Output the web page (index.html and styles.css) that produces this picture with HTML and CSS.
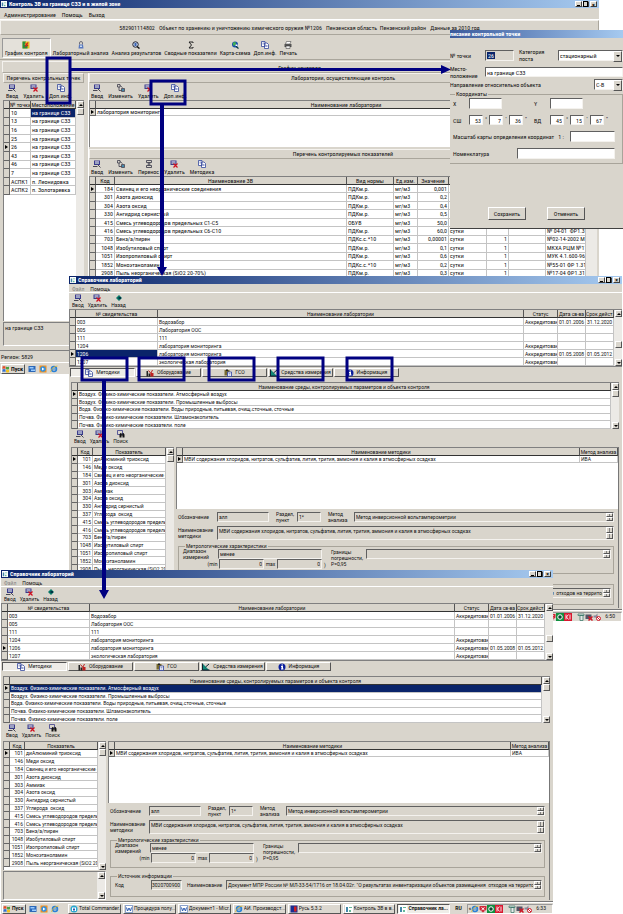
FILE: index.html
```html
<!DOCTYPE html>
<html lang="ru">
<head>
<meta charset="utf-8">
<title>Контроль ЗВ на границе СЗЗ и в жилой зоне</title>
<link rel="stylesheet" href="styles.css">
</head>
<body>
<svg class="defs" aria-hidden="true">
  <symbol id="i-app" viewBox="0 0 8 8"><path fill="#fff" d="M0 0h8v8H0z"/><path fill="#48a" d="M1 2h2v5H1z"/><path fill="#6b9" d="M4 2h3v1H4zM4 5h2v2H4z"/></symbol>
  <symbol id="i-add" viewBox="0 0 16 16"><path fill="#3a3a8c" d="M2 1h12v9H2z"/><path fill="#fff" d="M4 3h8v2H4z"/><path fill="#9ab" d="M4 6h8v2H4z"/><path stroke="#223" stroke-width="1.6" d="M0 13h9M10 10l5 5"/></symbol>
  <symbol id="i-del" viewBox="0 0 16 16"><path fill="#3a3a8c" d="M1 1h12v9H1z"/><path fill="#fff" d="M3 3h8v2H3z"/><path fill="#9ab" d="M3 6h8v2H3z"/><path stroke="#d01020" stroke-width="2.4" d="M7 7l8 8M15 7l-8 8"/></symbol>
  <symbol id="i-edit" viewBox="0 0 16 16"><path fill="none" stroke="#334" stroke-width="1.5" d="M1 1h5v5H1zM9 9h6v6H9zM4 6v7h5M6 3l5 4"/><path fill="#48a" d="M10 10h4v4h-4z"/></symbol>
  <symbol id="i-move" viewBox="0 0 16 16"><path fill="none" stroke="#334" stroke-width="1.6" d="M3 1h10v4H3zM3 11h10v4H3zM8 5v6M5 8h6"/></symbol>
  <symbol id="i-docs" viewBox="0 0 16 16"><path fill="#fff" stroke="#34489c" stroke-width="1.6" d="M1 1h7v10H1zM7 4h5l3 3v8H7z"/><path stroke="#34489c" d="M3 4h3M3 6h3M9 9h4M9 11h4"/></symbol>
  <symbol id="i-back" viewBox="0 0 16 16"><path fill="#087868" d="M8 2l6 6-6 6-6-6z"/><path fill="#034" d="M7 6h5v4H7z"/></symbol>
  <symbol id="i-find" viewBox="0 0 16 16"><path fill="none" stroke="#3a3a8c" stroke-width="1.6" d="M1 1h10v8H1z"/><path fill="#111" d="M5 15V9l2-3h2v3h2V6h2l2 3v6h-4v-4H9v4z"/></symbol>
  <symbol id="i-chart" viewBox="0 0 16 16"><path fill="#e8c020" d="M1 1h14v14H1z"/><path fill="#289040" d="M1 1h7l-3 6 6 3v5H1z"/><path stroke="#d02020" stroke-width="2.4" d="M7 5l5 5M12 3L6 12"/></symbol>
  <symbol id="i-lab" viewBox="0 0 16 16"><path fill="none" stroke="#556" stroke-width="1.6" d="M5 7V4q0-3 3-3t3 3v3"/><path fill="#5878c0" d="M4 7h8l1 8H3z"/><path fill="#cde" d="M6 9h4v3H6z"/></symbol>
  <symbol id="i-lens" viewBox="0 0 16 16"><circle cx="7" cy="7" r="5.5" fill="#cde" stroke="#223" stroke-width="2"/><path stroke="#111" stroke-width="3" d="M10 11l5 4"/><path fill="#3a60b0" d="M5 4h4v6H5z"/></symbol>
  <symbol id="i-sum" viewBox="0 0 16 16"><path fill="none" stroke="#222" stroke-width="2" d="M12 4V2H4l5 6-5 6h8v-2"/></symbol>
  <symbol id="i-map" viewBox="0 0 16 16"><circle cx="8" cy="7" r="6" fill="#1850a8"/><path fill="#40b050" d="M4 3l5-1 1 4-4 4-2-2z"/><path fill="#fff" d="M9 7h4v3H9z"/><path stroke="#034" stroke-width="2.4" d="M10 11l5 4"/></symbol>
  <symbol id="i-print" viewBox="0 0 16 16"><path fill="#fff" stroke="#333" d="M5 1h9l-2 5H3z"/><path fill="#555" d="M1 6h14v6H1z"/><path fill="#eee" stroke="#333" d="M4 10h8v5H4z"/></symbol>
  <symbol id="i-equip" viewBox="0 0 16 16"><path fill="#222" d="M1 4h3v11H1zM5 9h4v6H5z"/><path fill="#c02020" d="M9 8h6v7H9z"/><path stroke="#c02020" stroke-width="2" d="M5 3l5 6M13 2l-3 6"/></symbol>
  <symbol id="i-gso" viewBox="0 0 16 16"><path fill="#776a30" d="M1 2h10v11H1z"/><path fill="#222" d="M4 1h4v3H4z"/><path fill="#fff" stroke="#24389c" stroke-width="1.5" d="M7 6h8v9H7z"/><path stroke="#24389c" d="M9 9h4M9 12h4"/></symbol>
  <symbol id="i-tool" viewBox="0 0 16 16"><path fill="#108878" d="M1 1l13 13H1z"/><path fill="none" stroke="#123" stroke-width="2" d="M1 1v13h14M7 8l7-6"/></symbol>
  <symbol id="i-info" viewBox="0 0 16 16"><circle cx="8" cy="8" r="7" fill="#0a1e9c"/><path fill="#fff" d="M7 3h3v2H7zM6 6h4v5h1v2H6v-2h1V8H6z"/></symbol>
  <symbol id="i-win" viewBox="0 0 16 16"><path fill="#e0502c" d="M1 3q3-2 6 0v5q-3-2-6 0z"/><path fill="#4aa040" d="M8 3q3 2 6 0v5q-3 2-6 0z"/><path fill="#3070d0" d="M1 9q3-2 6 0v5q-3-2-6 0z"/><path fill="#f0c020" d="M8 9q3 2 6 0v5q-3 2-6 0z"/></symbol>
  <symbol id="i-desk" viewBox="0 0 16 16"><path fill="#2c68b8" d="M1 2h14v12H1z"/><path fill="#9cf" d="M3 4h8v3H3zM6 9h8v3H6z"/></symbol>
  <symbol id="i-play" viewBox="0 0 16 16"><path fill="#f09020" d="M1 1h14v14H1z"/><circle cx="8" cy="8" r="5.5" fill="#3090e0"/><path fill="#fff" d="M6 5l5 3-5 3z"/></symbol>
  <symbol id="i-ie" viewBox="0 0 16 16"><circle cx="8" cy="8" r="5" fill="none" stroke="#2880d8" stroke-width="3"/><path stroke="#2880d8" stroke-width="2" d="M4 8h9"/><path fill="none" stroke="#e8b820" stroke-width="1.5" d="M1 14Q4 3 15 2"/></symbol>
  <symbol id="i-tc" viewBox="0 0 16 16"><circle cx="8" cy="8" r="7" fill="#28a8d0"/><path fill="#fff" d="M4 5h8v7H4z"/><path fill="#2858b0" d="M6 7h4v4H6z"/></symbol>
  <symbol id="i-word" viewBox="0 0 16 16"><path fill="#fff" stroke="#2858b0" d="M1 1h14v14H1z"/><path fill="none" stroke="#2858b0" stroke-width="2" d="M3 5l2 7 3-6 3 6 2-7"/></symbol>
  <symbol id="i-rus" viewBox="0 0 16 16"><path fill="#1c2c90" d="M1 1h14v14H1z"/><path fill="#d02020" d="M8 3h5v10H8z"/></symbol>
  <symbol id="i-red" viewBox="0 0 16 16"><path fill="#d02838" d="M1 2h14v7l-7 6-7-6z"/><path stroke="#fff" stroke-width="2" d="M5 5l6 5M11 5l-6 5"/></symbol>
  <symbol id="i-green" viewBox="0 0 16 16"><path fill="#109040" d="M0 0h16v16H0z"/><circle cx="8" cy="8" r="4.5" fill="#143" stroke="#fff" stroke-width="2"/></symbol>
  <symbol id="i-kasp" viewBox="0 0 16 16"><path fill="#d81830" d="M0 0h16v16H0z"/><path fill="none" stroke="#fff" stroke-width="1.8" d="M4 3v10M9 3L5 8l4 5M12 3v10"/></symbol>
  <symbol id="i-net" viewBox="0 0 16 16"><path fill="#e8e8e8" stroke="#387868" stroke-width="1.5" d="M2 2h12v3H2zM6 5h6v10H6z"/></symbol>
  <symbol id="i-off" viewBox="0 0 16 16"><path fill="#556" d="M1 3h12v9H1z"/><path stroke="#d01828" stroke-width="3" d="M7 7l8 8M15 7l-8 8"/></symbol>
  <symbol id="i-mute" viewBox="0 0 16 16"><path fill="#889" d="M1 5h4l4-4v12L5 9H1z"/><circle cx="11" cy="11" r="4" fill="#fff" stroke="#d01828" stroke-width="2"/><path stroke="#d01828" stroke-width="2" d="M8 8l6 6"/></symbol>
</svg>

<main class="desktop">

<section class="window win-main" aria-label="Контроль ЗВ">
  <header class="title"><svg class="ico6"><use href="#i-app"/></svg><h2>Контроль ЗВ на границе СЗЗ и в жилой зоне</h2><button class="cap min" aria-label="Свернуть"></button><button class="cap res" aria-label="Восстановить"></button><button class="cap" aria-label="Закрыть">×</button></header>
  <nav class="menu wide"><a href="#">Администрирование</a><a href="#">Помощь</a><a href="#">Выход</a></nav>
  <div class="panel infoline">582901114802 &nbsp; Объект по хранению и уничтожению химического оружия №1206 &nbsp; Пензенская область &nbsp;Пензенский район &nbsp; Данные за 2010 год</div>
  <div class="bigbar">
    <button class="tool pressed"><svg><use href="#i-chart"/></svg>График контроля</button>
    <button class="tool"><svg><use href="#i-lab"/></svg>Лабораторный анализ</button>
    <button class="tool"><svg><use href="#i-lens"/></svg>Анализ результатов</button>
    <button class="tool"><svg><use href="#i-sum"/></svg>Сводные показатели</button>
    <button class="tool"><svg><use href="#i-map"/></svg>Карта-схема</button>
    <button class="tool"><svg><use href="#i-docs"/></svg>Доп.инф.</button>
    <button class="tool"><svg><use href="#i-print"/></svg>Печать</button>
  </div>
  <div class="panel heading">График контроля</div>
  <div class="split">
    <div class="points">
      <div class="panel subhead">Перечень контрольных точек</div>
      <div class="bar"><button class="tool"><svg><use href="#i-add"/></svg>Ввод</button><button class="tool"><svg><use href="#i-del"/></svg>Удалить</button><button class="tool"><svg><use href="#i-docs"/></svg>Доп.инф.</button></div>
      <div class="listbox grow">
        <div class="cells"><table class="t-points">
          <colgroup><col class="c-ind"><col class="c-num"><col></colgroup>
          <thead><tr><th></th><th>№ точки</th><th>Местоположение</th></tr></thead>
          <tbody>
          <tr><td></td><td>10</td><td class="sel">на границе СЗЗ</td></tr>
          <tr><td></td><td>13</td><td>на границе СЗЗ</td></tr>
          <tr><td></td><td>16</td><td>на границе СЗЗ</td></tr>
          <tr><td></td><td>25</td><td>на границе СЗЗ</td></tr>
          <tr class="cur"><td></td><td>26</td><td>на границе СЗЗ</td></tr>
          <tr><td></td><td>43</td><td>на границе СЗЗ</td></tr>
          <tr><td></td><td>46</td><td>на границе СЗЗ</td></tr>
          <tr><td></td><td>7</td><td>на границе СЗЗ</td></tr>
          <tr><td></td><td>АСПК1</td><td>п. Леонидовка</td></tr>
          <tr><td></td><td>АСПК2</td><td>п. Золотаревка</td></tr>
          </tbody>
        </table></div>
        <div class="scroll"><button class="up" aria-label="Вверх"></button><span class="thumb"></span></div>
      </div>
      <div class="memo note">на границе СЗЗ</div>
    </div>
    <div class="labs">
      <div class="panel subhead">Лаборатории, осуществляющие контроль</div>
      <div class="bar"><button class="tool"><svg><use href="#i-add"/></svg>Ввод</button><button class="tool"><svg><use href="#i-edit"/></svg>Изменить</button><button class="tool"><svg><use href="#i-del"/></svg>Удалить</button><button class="tool"><svg><use href="#i-docs"/></svg>Доп.инф.</button></div>
      <div class="listbox labbox">
        <div class="cells"><table class="t-lab">
          <colgroup><col class="c-ind"><col></colgroup>
          <thead><tr><th></th><th>Наименование лаборатории</th></tr></thead>
          <tbody><tr class="cur"><td></td><td>лаборатория мониторинга</td></tr></tbody>
        </table></div>
      </div>
      <div class="panel subhead next">Перечень контролируемых показателей</div>
      <div class="bar"><button class="tool"><svg><use href="#i-add"/></svg>Ввод</button><button class="tool"><svg><use href="#i-edit"/></svg>Изменить</button><button class="tool"><svg><use href="#i-move"/></svg>Перенос</button><button class="tool"><svg><use href="#i-del"/></svg>Удалить</button><button class="tool"><svg><use href="#i-docs"/></svg>Методика</button></div>
      <div class="listbox grow">
        <div class="cells"><table class="t-subst">
          <colgroup><col class="c-ind"><col class="c-code"><col><col class="c-norm"><col class="c-unit"><col class="c-val"><col class="c-per"><col class="c-one"><col class="c-gap"><col class="c-doc"></colgroup>
          <thead><tr><th></th><th>Код</th><th>Наименование ЗВ</th><th>Вид нормы</th><th>Ед.изм.</th><th>Значение</th><th></th><th></th><th></th><th></th></tr></thead>
          <tbody>
          <tr class="cur"><td></td><td class="r">184</td><td>Свинец и его неорганические соединения</td><td>ПДКм.р.</td><td>мг/м3</td><td class="r">0,001</td><td></td><td></td><td></td><td></td></tr>
          <tr><td></td><td class="r">301</td><td>Азота диоксид</td><td>ПДКм.р.</td><td>мг/м3</td><td class="r">0,2</td><td></td><td></td><td></td><td></td></tr>
          <tr><td></td><td class="r">304</td><td>Азота оксид</td><td>ПДКм.р.</td><td>мг/м3</td><td class="r">0,4</td><td></td><td></td><td></td><td></td></tr>
          <tr><td></td><td class="r">330</td><td>Ангидрид сернистый</td><td>ПДКм.р.</td><td>мг/м3</td><td class="r">0,5</td><td></td><td></td><td></td><td></td></tr>
          <tr><td></td><td class="r">415</td><td>Смесь углеводородов предельных С1-С5</td><td>ОБУВ</td><td>мг/м3</td><td class="r">50,0</td><td></td><td></td><td></td><td></td></tr>
          <tr><td></td><td class="r">416</td><td>Смесь углеводородов предельных С6-С10</td><td>ПДКм.р.</td><td>мг/м3</td><td class="r">60,0</td><td>сутки</td><td></td><td></td><td>№ 04-01 &nbsp;ФР1.31</td></tr>
          <tr><td></td><td class="r">703</td><td>Бенз/а/пирен</td><td>ПДКс.с.*10</td><td>мг/м3</td><td class="r">0,00001</td><td>сутки</td><td class="r">1</td><td></td><td>№02-14-2002 МУ</td></tr>
          <tr><td></td><td class="r">1048</td><td>Изобутиловый спирт</td><td>ПДКм.р.</td><td>мг/м3</td><td class="r">0,1</td><td>сутки</td><td class="r">1</td><td></td><td>МКХА РЦМ №11</td></tr>
          <tr><td></td><td class="r">1051</td><td>Изопропиловый спирт</td><td>ПДКм.р.</td><td>мг/м3</td><td class="r">0,6</td><td>сутки</td><td class="r">1</td><td></td><td>МУК 4.1.600-96</td></tr>
          <tr><td></td><td class="r">1852</td><td>Моноэтаноламин</td><td>ПДКс.с.*10</td><td>мг/м3</td><td class="r">0,2</td><td>сутки</td><td class="r">1</td><td></td><td>№55-01 ФР 1.31</td></tr>
          <tr><td></td><td class="r">2908</td><td>Пыль неорганическая (SiO2 20-70%)</td><td>ПДКм.р.</td><td>мг/м3</td><td class="r">0,3</td><td>сутки</td><td class="r">1</td><td></td><td>№17-04 ФР1.31</td></tr>
          </tbody>
        </table></div>
        <div class="scroll"></div>
      </div>
    </div>
  </div>
  <div class="status">Регион: 5829</div>
  <footer class="taskbar"><button class="start"><svg class="ico8"><use href="#i-win"/></svg>Пуск</button><span class="quick"><svg><use href="#i-desk"/></svg><svg><use href="#i-play"/></svg><svg><use href="#i-ie"/></svg></span></footer>
</section>

<section class="window dialog" aria-label="Описание контрольной точки">
  <header class="title"><h2>писание контрольной точки</h2></header>
  <form class="dlg">
    <div class="row top"><label class="lead" for="pt">№ точки</label><span class="ptbox off w-pt"><input id="pt" value="26"></span><label class="cat" for="cat">Категория поста</label><span class="drop w-cat"><select id="cat"><option>стационарный</option></select></span></div>
    <div class="row place"><label class="lead" for="place">Место-<br>положение</label><input class="grow" id="place" value="на границе СЗЗ"></div>
    <div class="row dir"><label for="dir">Направление относительно объекта</label><span class="drop w-dir"><select id="dir"><option>С-В</option></select></span></div>
    <fieldset class="coords"><legend>Координаты</legend>
      <div class="pair">
        <div class="row"><label class="ax" for="x">X</label><input id="x" class="w-xy"></div>
        <div class="row"><label class="ax" for="y">Y</label><input id="y" class="w-xy"></div>
      </div>
      <div class="pair">
        <div class="row"><label class="ax" for="n1">СШ</label><input id="n1" class="deg" value="53"><span class="u">°</span><input class="deg" aria-label="минуты СШ" value="7"><span class="u">'</span><input class="deg" aria-label="секунды СШ" value="36"><span class="u">"</span></div>
        <div class="row"><label class="ax" for="e1">ВД</label><input id="e1" class="deg" value="45"><span class="u">°</span><input class="deg" aria-label="минуты ВД" value="15"><span class="u">'</span><input class="deg" aria-label="секунды ВД" value="67"><span class="u">"</span></div>
      </div>
      <div class="row wide"><label for="sc">Масштаб карты определения координат &nbsp; 1 :</label><input id="sc" class="w-sc"></div>
      <div class="row wide"><label for="nom">Номенклатура</label><input id="nom" class="w-nom"></div>
    </fieldset>
    <div class="actions"><button type="button" class="push">Сохранить</button><button type="button" class="push">Отменить</button></div>
  </form>
</section>

<section class="window win-dir first" aria-label="Справочник лабораторий">
  <header class="title"><svg class="ico6"><use href="#i-app"/></svg><h2>Справочник лабораторий</h2><button class="cap min" aria-label="Свернуть"></button><button class="cap res" aria-label="Восстановить"></button><button class="cap" aria-label="Закрыть">×</button></header>
  <nav class="menu"><a href="#" class="dim">Файл</a><a href="#">Помощь</a></nav>
  <div class="bar edge"><button class="tool"><svg><use href="#i-add"/></svg>Ввод</button><button class="tool"><svg><use href="#i-del"/></svg>Удалить</button><button class="tool"><svg><use href="#i-back"/></svg>Назад</button></div>
  <div class="listbox">
    <div class="cells"><table class="t-cert">
      <colgroup><col class="c-ind"><col class="c-cert"><col><col class="c-stat"><col class="c-from"><col class="c-till"></colgroup>
      <thead><tr><th></th><th>№ свидетельства</th><th>Наименование лаборатории</th><th>Статус</th><th>Дата св-ва</th><th>Срок дейст.</th></tr></thead>
      <tbody>
      <tr><td></td><td>003</td><td>Водозабор</td><td>Аккредитован</td><td>01.01.2006</td><td>31.12.2020</td></tr>
      <tr><td></td><td>005</td><td>Лаборатория ООС</td><td></td><td></td><td></td></tr>
      <tr><td></td><td>111</td><td>111</td><td></td><td></td><td></td></tr>
      <tr><td></td><td>1204</td><td>лаборатория мониторинга</td><td>Аккредитован</td><td></td><td></td></tr>
      <tr class="cur"><td></td><td class="sel">1206</td><td>лаборатория мониторинга</td><td>Аккредитован</td><td>01.05.2008</td><td>01.05.2012</td></tr>
      <tr><td></td><td>1207</td><td>экологическая лаборатория</td><td>Аккредитован</td><td></td><td></td></tr>
      </tbody>
    </table></div>
    <div class="scroll"><button class="up" aria-label="Вверх"></button><span class="thumb mid"></span><button class="down" aria-label="Вниз"></button></div>
  </div>
  <div class="tabs"><button class="push on"><svg><use href="#i-docs"/></svg>Методики</button><button class="push"><svg><use href="#i-equip"/></svg>Оборудование</button><button class="push"><svg><use href="#i-gso"/></svg>ГСО</button><button class="push"><svg><use href="#i-tool"/></svg>Средства измерения</button><button class="push"><svg><use href="#i-info"/></svg>Информация</button></div>
  <div class="body">
    <div class="listbox">
      <div class="cells"><table class="t-env">
        <colgroup><col class="c-ind"><col></colgroup>
        <thead><tr><th></th><th>Наименование среды, контролируемых параметров и объекта контроля</th></tr></thead>
        <tbody>
        <tr class="cur"><td></td><td>Воздух. Физико-химические показатели. Атмосферный воздух</td></tr>
        <tr><td></td><td>Воздух. Физико-химические показатели. Промышленные выбросы</td></tr>
        <tr><td></td><td>Вода. Физико-химические показатели. Воды природные, питьевая, очищ.сточные, сточные</td></tr>
        <tr><td></td><td>Почва. Физико-химические показатели. Шламонакопитель</td></tr>
        <tr><td></td><td>Почва. Физико-химические показатели. поле</td></tr>
        </tbody>
      </table></div>
      <div class="scroll"><button class="up" aria-label="Вверх"></button><span class="thumb"></span><button class="down last" aria-label="Вниз"></button></div>
    </div>
    <div class="bar"><button class="tool"><svg><use href="#i-add"/></svg>Ввод</button><button class="tool"><svg><use href="#i-del"/></svg>Удалить</button><button class="tool"><svg><use href="#i-find"/></svg>Поиск</button></div>
    <div class="lower">
      <div class="codes">
        <div class="listbox grow">
          <div class="cells"><table class="t-codes">
            <colgroup><col class="c-ind"><col class="c-cod"><col></colgroup>
            <thead><tr><th></th><th>Код</th><th>Показатель</th></tr></thead>
            <tbody>
            <tr class="cur"><td></td><td class="r">101</td><td>диАлюминий триоксид</td></tr>
            <tr><td></td><td class="r">146</td><td>Меди оксид</td></tr>
            <tr><td></td><td class="r">184</td><td>Свинец и его неорганические со</td></tr>
            <tr><td></td><td class="r">301</td><td>Азота диоксид</td></tr>
            <tr><td></td><td class="r">303</td><td>Аммиак</td></tr>
            <tr><td></td><td class="r">304</td><td>Азота оксид</td></tr>
            <tr><td></td><td class="r">330</td><td>Ангидрид сернистый</td></tr>
            <tr><td></td><td class="r">337</td><td>Углерода &nbsp;оксид</td></tr>
            <tr><td></td><td class="r">415</td><td>Смесь углеводородов предельн</td></tr>
            <tr><td></td><td class="r">416</td><td>Смесь углеводородов предельн</td></tr>
            <tr><td></td><td class="r">703</td><td>Бенз/а/пирен</td></tr>
            <tr><td></td><td class="r">1048</td><td>Изобутиловый спирт</td></tr>
            <tr><td></td><td class="r">1051</td><td>Изопропиловый спирт</td></tr>
            <tr><td></td><td class="r">1852</td><td>Моноэтаноламин</td></tr>
            <tr><td></td><td class="r">2908</td><td>Пыль неорганическая (SiO2 20-7</td></tr>
            </tbody>
          </table></div>
          <div class="scroll"><button class="up" aria-label="Вверх"></button><span class="thumb"></span><button class="down last" aria-label="Вниз"></button></div>
        </div>
        <div class="memo"></div>
      </div>
      <div class="method">
        <div class="listbox methods"><div class="cells"><table class="t-meth">
          <colgroup><col class="c-ind"><col><col class="c-an"></colgroup>
          <thead><tr><th></th><th>Наименование методики</th><th>Метод анализа</th></tr></thead>
          <tbody><tr class="cur"><td></td><td>МВИ содержания хлоридов, нитратов, сульфатив, лития, трития, аммония и калия в атмосферных осадках</td><td>ИВА</td></tr></tbody>
        </table></div></div>
        <form class="card">
          <div class="row"><label class="lead" for="a1">Обозначение</label><input class="off w-ob" id="a1" value="алл"><label class="sec" for="a2">Раздел,<br>пункт</label><input class="off w-sec" id="a2" value="1*"><label class="an" for="a3">Метод<br>анализа</label><span class="spin"><input id="a3" value="Метод инверсионной вольтамперометрии"><i></i></span></div>
          <div class="row tall"><label class="lead" for="a4">Наименование<br>методики</label><span class="spin"><input id="a4" value="МВИ содержания хлоридов, нитратов, сульфатив, лития, трития, аммония и калия в атмосферных осадках"><i></i></span></div>
          <fieldset class="metro"><legend>Метрологические характеристики</legend>
            <div class="range">
              <div class="row"><label class="lead" for="a5">Диапазон<br>измерений</label><input class="off grow" id="a5" value="менее"></div>
              <div class="row mm"><label for="a6">(min</label><input class="off r" id="a6" value="0"><label for="a7">max</label><input class="off r" id="a7" value="0"></div>
            </div>
            <span class="paren">)</span>
            <label class="lim" for="a8">Границы<br>погрешности,<br>P=0,95</label><span class="spin"><input id="a8"><i></i></span>
          </fieldset>
          <fieldset class="source"><legend>Источник информации</legend>
            <div class="row"><label class="lead" for="a9">Код</label><input class="off w-src" id="a9" value="3020700900"><label class="srcn" for="a10">Наименование</label><span class="spin"><input id="a10" value='Документ МПР России № МЛ-33-54/1716 от 18.04.02г. "О результатах инвентаризации объектов размещения  отходов на территории'><i></i></span></div>
          </fieldset>
        </form>
      </div>
    </div>
  </div>
  <footer class="taskbar"><span class="tray"><svg><use href="#i-red"/></svg><svg><use href="#i-green"/></svg><svg><use href="#i-kasp"/></svg><svg class="gap"><use href="#i-net"/></svg><svg><use href="#i-off"/></svg><svg><use href="#i-mute"/></svg><time>6:50</time></span></footer>
</section>

<section class="window win-dir second" aria-label="Справочник лабораторий, строка выбрана">
  <header class="title"><svg class="ico6"><use href="#i-app"/></svg><h2>Справочник лабораторий</h2><button class="cap min" aria-label="Свернуть"></button><button class="cap res" aria-label="Восстановить"></button><button class="cap" aria-label="Закрыть">×</button></header>
  <nav class="menu"><a href="#" class="dim">Файл</a><a href="#">Помощь</a></nav>
  <div class="bar edge"><button class="tool"><svg><use href="#i-add"/></svg>Ввод</button><button class="tool"><svg><use href="#i-del"/></svg>Удалить</button><button class="tool"><svg><use href="#i-back"/></svg>Назад</button></div>
  <div class="listbox">
    <div class="cells"><table class="t-cert">
      <colgroup><col class="c-ind"><col class="c-cert"><col><col class="c-stat"><col class="c-from"><col class="c-till"></colgroup>
      <thead><tr><th></th><th>№ свидетельства</th><th>Наименование лаборатории</th><th>Статус</th><th>Дата св-ва</th><th>Срок дейст.</th></tr></thead>
      <tbody>
      <tr><td></td><td>003</td><td>Водозабор</td><td>Аккредитован</td><td>01.01.2006</td><td>31.12.2020</td></tr>
      <tr><td></td><td>005</td><td>Лаборатория ООС</td><td></td><td></td><td></td></tr>
      <tr><td></td><td>111</td><td>111</td><td></td><td></td><td></td></tr>
      <tr><td></td><td>1204</td><td>лаборатория мониторинга</td><td>Аккредитован</td><td></td><td></td></tr>
      <tr class="cur"><td></td><td>1206</td><td>лаборатория мониторинга</td><td>Аккредитован</td><td>01.05.2008</td><td>01.05.2012</td></tr>
      <tr><td></td><td>1207</td><td>экологическая лаборатория</td><td>Аккредитован</td><td></td><td></td></tr>
      </tbody>
    </table></div>
    <div class="scroll"><button class="up" aria-label="Вверх"></button><span class="thumb mid"></span><button class="down" aria-label="Вниз"></button></div>
  </div>
  <div class="tabs"><button class="push on"><svg><use href="#i-docs"/></svg>Методики</button><button class="push"><svg><use href="#i-equip"/></svg>Оборудование</button><button class="push"><svg><use href="#i-gso"/></svg>ГСО</button><button class="push"><svg><use href="#i-tool"/></svg>Средства измерения</button><button class="push"><svg><use href="#i-info"/></svg>Информация</button></div>
  <div class="body">
    <div class="listbox">
      <div class="cells"><table class="t-env">
        <colgroup><col class="c-ind"><col></colgroup>
        <thead><tr><th></th><th>Наименование среды, контролируемых параметров и объекта контроля</th></tr></thead>
        <tbody>
        <tr class="cur"><td></td><td class="sel">Воздух. Физико-химические показатели. Атмосферный воздух</td></tr>
        <tr><td></td><td>Воздух. Физико-химические показатели. Промышленные выбросы</td></tr>
        <tr><td></td><td>Вода. Физико-химические показатели. Воды природные, питьевая, очищ.сточные, сточные</td></tr>
        <tr><td></td><td>Почва. Физико-химические показатели. Шламонакопитель</td></tr>
        <tr><td></td><td>Почва. Физико-химические показатели. поле</td></tr>
        </tbody>
      </table></div>
      <div class="scroll"><button class="up" aria-label="Вверх"></button><span class="thumb"></span><button class="down last" aria-label="Вниз"></button></div>
    </div>
    <div class="bar"><button class="tool"><svg><use href="#i-add"/></svg>Ввод</button><button class="tool"><svg><use href="#i-del"/></svg>Удалить</button><button class="tool"><svg><use href="#i-find"/></svg>Поиск</button></div>
    <div class="lower">
      <div class="codes">
        <div class="listbox grow">
          <div class="cells"><table class="t-codes">
            <colgroup><col class="c-ind"><col class="c-cod"><col></colgroup>
            <thead><tr><th></th><th>Код</th><th>Показатель</th></tr></thead>
            <tbody>
            <tr class="cur"><td></td><td class="r">101</td><td>диАлюминий триоксид</td></tr>
            <tr><td></td><td class="r">146</td><td>Меди оксид</td></tr>
            <tr><td></td><td class="r">184</td><td>Свинец и его неорганические со</td></tr>
            <tr><td></td><td class="r">301</td><td>Азота диоксид</td></tr>
            <tr><td></td><td class="r">303</td><td>Аммиак</td></tr>
            <tr><td></td><td class="r">304</td><td>Азота оксид</td></tr>
            <tr><td></td><td class="r">330</td><td>Ангидрид сернистый</td></tr>
            <tr><td></td><td class="r">337</td><td>Углерода &nbsp;оксид</td></tr>
            <tr><td></td><td class="r">415</td><td>Смесь углеводородов предельн</td></tr>
            <tr><td></td><td class="r">416</td><td>Смесь углеводородов предельн</td></tr>
            <tr><td></td><td class="r">703</td><td>Бенз/а/пирен</td></tr>
            <tr><td></td><td class="r">1048</td><td>Изобутиловый спирт</td></tr>
            <tr><td></td><td class="r">1051</td><td>Изопропиловый спирт</td></tr>
            <tr><td></td><td class="r">1852</td><td>Моноэтаноламин</td></tr>
            <tr><td></td><td class="r">2908</td><td>Пыль неорганическая (SiO2 20-7</td></tr>
            </tbody>
          </table></div>
          <div class="scroll"><button class="up" aria-label="Вверх"></button><span class="thumb"></span><button class="down last" aria-label="Вниз"></button></div>
        </div>
        <div class="memo"><div class="scroll"><button class="up" aria-label="Вверх"></button><button class="down last" aria-label="Вниз"></button></div></div>
      </div>
      <div class="method">
        <div class="listbox methods"><div class="cells"><table class="t-meth">
          <colgroup><col class="c-ind"><col><col class="c-an"></colgroup>
          <thead><tr><th></th><th>Наименование методики</th><th>Метод анализа</th></tr></thead>
          <tbody><tr class="cur"><td></td><td>МВИ содержания хлоридов, нитратов, сульфатив, лития, трития, аммония и калия в атмосферных осадках</td><td>ИВА</td></tr></tbody>
        </table></div></div>
        <form class="card">
          <div class="row"><label class="lead" for="b1">Обозначение</label><input class="off w-ob" id="b1" value="алл"><label class="sec" for="b2">Раздел,<br>пункт</label><input class="off w-sec" id="b2" value="1*"><label class="an" for="b3">Метод<br>анализа</label><span class="spin"><input id="b3" value="Метод инверсионной вольтамперометрии"><i></i></span></div>
          <div class="row tall"><label class="lead" for="b4">Наименование<br>методики</label><span class="spin"><input id="b4" value="МВИ содержания хлоридов, нитратов, сульфатив, лития, трития, аммония и калия в атмосферных осадках"><i></i></span></div>
          <fieldset class="metro"><legend>Метрологические характеристики</legend>
            <div class="range">
              <div class="row"><label class="lead" for="b5">Диапазон<br>измерений</label><input class="off grow" id="b5" value="менее"></div>
              <div class="row mm"><label for="b6">(min</label><input class="off r" id="b6" value="0"><label for="b7">max</label><input class="off r" id="b7" value="0"></div>
            </div>
            <span class="paren">)</span>
            <label class="lim" for="b8">Границы<br>погрешности,<br>P=0,95</label><span class="spin"><input id="b8"><i></i></span>
          </fieldset>
          <fieldset class="source"><legend>Источник информации</legend>
            <div class="row"><label class="lead" for="b9">Код</label><input class="off w-src" id="b9" value="3020700900"><label class="srcn" for="b10">Наименование</label><span class="spin"><input id="b10" value='Документ МПР России № МЛ-33-54/1716 от 18.04.02г. "О результатах инвентаризации объектов размещения  отходов на территории'><i></i></span></div>
          </fieldset>
        </form>
      </div>
    </div>
  </div>
  <footer class="taskbar">
    <button class="start"><svg class="ico8"><use href="#i-win"/></svg>Пуск</button>
    <span class="quick"><svg><use href="#i-desk"/></svg><svg><use href="#i-play"/></svg><svg><use href="#i-ie"/></svg></span>
    <div class="tasks">
      <button class="task"><svg><use href="#i-tc"/></svg><span>Total Commander...</span></button>
      <button class="task"><svg><use href="#i-word"/></svg><span>Процедура полу...</span></button>
      <button class="task"><svg><use href="#i-word"/></svg><span>Документ1 - Micr...</span></button>
      <button class="task"><svg><use href="#i-ie"/></svg><span>АИ. Производст...</span></button>
      <button class="task"><svg><use href="#i-rus"/></svg><span>Русь 5.3.2</span></button>
      <button class="task"><svg><use href="#i-app"/></svg><span>Контроль ЗВ в в...</span></button>
      <button class="task on"><svg><use href="#i-app"/></svg><span>Справочник ла...</span></button>
    </div>
    <b class="lang">RU</b>
    <span class="tray"><b>«</b><svg><use href="#i-ie"/></svg><svg><use href="#i-red"/></svg><svg><use href="#i-green"/></svg><svg><use href="#i-kasp"/></svg><svg class="gap"><use href="#i-net"/></svg><svg><use href="#i-off"/></svg><svg><use href="#i-mute"/></svg><time>6:33</time></span>
  </footer>
</section>

<svg class="callouts" width="623" height="914" viewBox="0 0 623 914" aria-hidden="true">
  <g fill="none" stroke="#000080" stroke-width="3">
    <path d="M47 58h23v45H47zM151 81h34v23H151zM82 358h45v22H82zM139 358h45v22h-45zM209 358h45v22h-45zM278 358h45v22h-45zM347 358h45v22h-45z"/>
    <path d="M71 69.500H442"/><path stroke-width="4" d="M162 104v164M104 381v210"/>
  </g>
  <path fill="#000080" d="M441 65l10 4.500-10 4.500zM157 267h10l-5 9zM99 590h10l-5 9z"/>
</svg>
</main>
</body>
</html>
```

FILE: styles.css
```css
:root {
  --face: #d9d5cc;
  --dark: #808080;
  --grid: #c4c4c4;
  --navy: #0a246a;
}
* { box-sizing: border-box; }
body {
  margin: 0;
  background: #fff;
  color: #111;
  font: 6px/7px "Roboto Condensed", "Liberation Sans", sans-serif;
}
button, input, select { font: inherit; color: inherit; margin: 0; }
button { padding: 0; border: 0; background: none; white-space: nowrap; }
.defs { position: absolute; width: 0; height: 0; }
.desktop { position: relative; min-height: 914px; overflow: hidden; }
.callouts { position: absolute; left: 0; top: 0; pointer-events: none; }
.window { position: absolute; display: flex; flex-direction: column; background: var(--face); overflow: hidden; }
.win-main { left: 0; right: 24px; top: 0; height: 374px; }
.dialog { left: 450px; right: 0; top: 30px; height: 199px; border-bottom: 1px solid #404040; }
.win-dir { font: 5px/7px Roboto, "Liberation Sans", sans-serif; }
.first { left: 69px; right: 1px; top: 276px; height: 346px; }
.second { left: 1px; right: 70px; top: 570px; height: 344px; }
.grow { flex: 1; min-width: 0; min-height: 0; }

/* title bars and menus */
.title { display: flex; align-items: center; height: 8px; flex: none; padding: 0 2px 0 1px; background: linear-gradient(90deg, #0a246a, #a6caf0); color: #fff; }
.title h2 { margin: 0 auto 0 2px; font: bold 6px/8px "Roboto Condensed", "Liberation Sans", sans-serif; white-space: nowrap; }
.ico6 { width: 6px; height: 6px; }
.ico8 { width: 8px; height: 8px; }
.cap { display: flex; align-items: center; justify-content: center; width: 7px; height: 6px; line-height: 5px; background: var(--face); color: #000; font-weight: bold; border: 1px solid; border-color: #fff #404040 #404040 #fff; }
.cap:last-child { margin-left: 1px; }
.cap.min::before { content: ""; width: 3px; height: 1px; margin-top: 2px; background: #000; }
.cap.res::before { content: ""; width: 4px; height: 4px; border: 1px solid #000; }
.menu { display: flex; gap: 6px; height: 9px; flex: none; padding: 2px 3px 0; border-bottom: 1px solid #fff; }
.menu.wide { height: 12px; padding: 3px 4px 0; }
.menu a { color: inherit; text-decoration: none; }
.menu .dim { color: var(--dark); }

/* panels and toolbars */
.panel { flex: none; text-align: center; border: 1px solid; border-color: #f4f2ee #aaa69c #aaa69c #f4f2ee; white-space: nowrap; overflow: hidden; }
.infoline { height: 15px; line-height: 13px; }
.heading { height: 12px; line-height: 11px; margin: 0 2px; }
.subhead { height: 10px; line-height: 8px; }
.bigbar { display: flex; gap: 1px; height: 25px; flex: none; padding: 3px 2px 1px; border-bottom: 1px solid #aaa69c; margin-bottom: 1px; }
.bigbar .tool { padding: 0 1px; }
.bigbar .pressed { border: 1px solid; border-color: #999 #fff #fff #999; background: #e4e1da; padding: 0 2px; }
.tool { display: flex; flex-direction: column; align-items: center; justify-content: center; }
.tool svg { width: 8px; height: 8px; }
.bar { display: flex; gap: 5px; height: 17px; flex: none; padding: 0 3px; }
.bar.edge { height: 16px; }

/* grids */
.listbox { display: flex; background: #fff; border-top: 1px solid var(--dark); border-left: 1px solid var(--dark); }
.cells { flex: 1; min-width: 0; overflow: hidden; }
table { width: 100%; table-layout: fixed; border-spacing: 0; }
th, td { padding: 0 1px; line-height: 6px; white-space: nowrap; overflow: hidden; text-align: left; }
th { height: 8px; padding: 0; font-weight: normal; text-align: center; background: var(--face); border-right: 1px solid #555; border-bottom: 1px solid #333; }
td { border-right: 1px solid var(--grid); border-bottom: 1px solid var(--grid); }
td:first-child { background: var(--face); border-color: #666; padding: 0; }
.cur td:first-child::before { content: ""; display: block; width: 0; margin-left: 1px; border: 2px solid transparent; border-left: 3px solid #000; border-right: 0; }
td.sel { background: var(--navy); color: #fff; }
.r { text-align: right; }
.c-ind { width: 6px; }
.c-num { width: 21px; }
.c-code { width: 19px; }
.c-norm { width: 47px; }
.c-unit { width: 24px; }
.c-val { width: 31px; }
.c-per { width: 38px; }
.c-one { width: 22px; }
.c-gap { width: 37px; }
.c-doc { width: 40px; }
.c-cert { width: 82px; }
.c-stat { width: 34px; }
.c-from, .c-till { width: 28px; }
.c-cod { width: 15px; }
.c-an { width: 38px; }
.t-points { height: 94px; }
.t-subst { height: 101px; }
.t-cert { height: 56px; }
.t-env { height: 46px; }
.t-codes { height: 125px; }
.scroll { display: flex; flex-direction: column; width: 8px; flex: none; padding-left: 1px; background: #eceae6; }
.up, .down, .thumb { width: 7px; height: 7px; flex: none; background: var(--face); border: 1px solid; border-color: #fff #555 #555 #fff; display: flex; align-items: center; justify-content: center; }
.up::before, .down::before { content: ""; border: 2px solid transparent; }
.up::before { border-top: 0; border-bottom-color: #000; }
.down::before { border-bottom: 0; border-top-color: #000; }
.thumb.mid { margin: auto 0 11px; }
.down.last { margin-top: auto; }
.memo { display: flex; justify-content: flex-end; height: 29px; margin-top: 1px; border: 1px solid; border-color: var(--dark) #fff #fff var(--dark); }

/* main window */
.split { display: flex; flex: 1; min-height: 0; gap: 4px; padding: 0 2px 4px 3px; }
.points { display: flex; flex-direction: column; width: 81px; }
.labs { display: flex; flex-direction: column; flex: 1; min-width: 0; border-left: 1px solid #fff; }
.points .note { height: 24px; justify-content: flex-start; padding: 1px; }
.labs .scroll { width: 11px; }
.labs .bar { padding: 0 2px; }
.labbox { height: 47px; flex: none; }
.next { margin-top: 2px; }
.status { height: 12px; flex: none; padding: 2px 1px; border-top: 1px solid var(--dark); }

/* taskbar */
.taskbar { display: flex; align-items: center; height: 12px; flex: none; padding-left: 1px; background: #dcd8d0; border-top: 1px solid #fff; }
.start { display: flex; align-items: center; gap: 1px; width: 24px; height: 10px; font-weight: bold; border: 1px solid; border-color: #fff #555 #555 #fff; }
.quick { display: flex; gap: 3px; margin: 0 9px 0 3px; }
.taskbar svg { width: 8px; height: 8px; flex: none; }
.tasks { display: flex; gap: 2px; flex: 1; min-width: 0; }
.task { display: flex; flex: 1; min-width: 0; align-items: center; gap: 1px; height: 10px; padding-left: 1px; border: 1px solid; border-color: #fff #555 #555 #fff; }
.task span { overflow: hidden; }
.task.on { font-weight: bold; background: #efede8; border-color: #555 #fff #fff #555; }
.lang { margin: 0 5px; }
.tray { display: flex; align-items: center; height: 10px; padding: 0 6px 0 1px; border: 1px solid; border-color: #999 #fff #fff #999; margin-left: auto; }
.tray .gap { margin-left: 5px; }
.tray time { margin-left: 4px; }

/* form controls */
input, select { height: 10px; padding: 0 1px; border: 1px solid; border-color: #606060 #f4f2ee #f4f2ee #606060; border-radius: 0; background: #fff; min-width: 0; outline: 0; }
.off { background: var(--face); }
.drop { display: flex; position: relative; }
.drop select { appearance: none; width: 100%; height: 11px; }
.drop::before, .drop::after { content: ""; position: absolute; pointer-events: none; }
.drop::before { right: 1px; top: 1px; width: 7px; height: 9px; background: var(--face); border: 1px solid; border-color: #fff #555 #555 #fff; }
.drop::after { right: 3px; top: 5px; border: 2px solid transparent; border-bottom: 0; border-top-color: #000; width: 0; }
.row { display: flex; align-items: center; }
.push { display: flex; align-items: center; justify-content: center; border: 1px solid; border-color: #fff #555 #555 #fff; background: var(--face); }
fieldset { margin: 0; padding: 0; border: 1px solid #a8a49a; min-width: 0; }
legend { padding: 0 1px; margin-left: 2px; line-height: 6px; }

/* dialog */
.dialog .title { padding: 0; background: linear-gradient(90deg, #3a5a9c, #a6caf0); }
.dialog h2 { margin-left: 0; }
.dlg { display: flex; flex-direction: column; flex: 1; }
.dlg .lead { width: 35px; }
.dlg .top { margin-top: 9px; height: 16px; }
.w-pt { width: 29px; }
.ptbox { height: 11px; padding: 1px; border: 1px solid; border-color: #606060 #f4f2ee #f4f2ee #606060; }
.ptbox input { display: block; width: 8px; height: 7px; padding: 0 1px; border: 0; background: var(--navy); color: #fff; }
.cat { width: 30px; margin: 0 9px 0 5px; }
.w-cat { flex: 1; }
.dlg .place { height: 14px; margin-top: 2px; }
.dlg .dir { height: 11px; justify-content: space-between; }
.w-dir { width: 29px; }
.coords { padding: 1px 7px 4px 3px; border-left: 0; display: flex; flex-direction: column; gap: 6px; margin-top: 1px; }
.pair { display: flex; }
.pair .row { width: 81px; }
.ax { width: 16px; }
.w-xy { width: 33px; height: 11px; }
.deg { width: 14px; text-align: right; }
.u { width: 6px; height: 10px; line-height: 8px; text-align: center; }
.coords .wide { justify-content: space-between; white-space: nowrap; }
.w-sc { width: 45px; height: 11px; }
.w-nom { width: 98px; height: 11px; }
.actions { display: flex; gap: 21px; margin: auto 0 8px 38px; }
.actions .push { width: 38px; height: 13px; }

/* laboratory directory */
.win-dir .bar { gap: 4px; }
.tabs { display: flex; gap: 1px; padding: 1px 1px 5px; height: 16px; flex: none; border-top: 1px solid var(--dark); }
.tabs .push { width: 65px; gap: 3px; }
.tabs svg { width: 8px; height: 8px; flex: none; }
.tabs .on { background: #eeece7; border-color: #555 #fff #fff #555; }
.body { display: flex; flex-direction: column; flex: 1; min-height: 0; padding: 0 3px 1px 2px; border-bottom: 1px solid #777; }
.body > .listbox { flex: none; }
.body > .bar { margin-bottom: 1px; }
.lower { display: flex; flex: 1; min-height: 0; gap: 2px; }
.codes { display: flex; flex-direction: column; width: 103px; }
.method { display: flex; flex-direction: column; flex: 1; min-width: 0; border-right: 1px solid #777; }
.methods { height: 62px; flex: none; }
.card { display: flex; flex-direction: column; flex: 1; padding: 2px 4px 3px 2px; }
.card .row { height: 12px; }
.card .lead { width: 39px; }
.card label { line-height: 6px; flex: none; }
.card .tall { height: 14px; margin-top: 3px; align-items: center; }
.card .tall .spin { height: 14px; }
.w-ob { width: 52px; }
.w-sec { width: 24px; }
.sec { width: 21px; margin-left: 7px; }
.an { width: 26px; margin-left: 7px; }
.spin { display: flex; flex: 1; min-width: 0; height: 10px; border: 1px solid; border-color: #606060 #f4f2ee #f4f2ee #606060; }
.spin input { flex: 1; border: 0; background: none; height: 8px; }
.spin i { display: flex; flex-direction: column; width: 7px; }
.spin i::before, .spin i::after { content: ""; flex: 1; border: 1px solid; border-color: #fff #555 #555 #fff; background: var(--dark) content-box; padding: 0 2px; }
.metro { display: flex; align-items: flex-start; padding: 0 2px 3px 4px; height: 31px; margin-top: 3px; }
.range { width: 139px; }
.metro .lead { width: 35px; }
.card .metro .row { height: 10px; }
.mm input { width: 45px; }
.mm label { width: 13px; text-align: center; }
.mm { justify-content: flex-end; }
.paren { align-self: flex-end; width: 9px; padding-left: 2px; }
.lim { width: 35px; }
.source { margin-top: auto; padding: 0 2px 2px 4px; height: 24px; }
.source .lead { width: 36px; }
.w-src { width: 31px; padding: 0; }
.srcn { width: 39px; margin-left: 5px; }
```
